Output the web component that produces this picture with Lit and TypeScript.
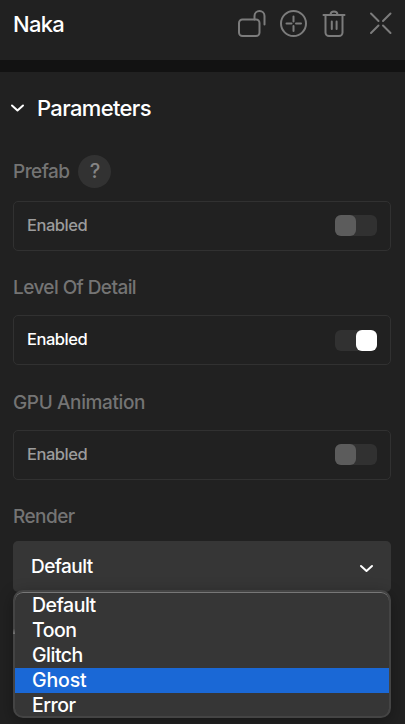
import { LitElement, html, css } from "lit";
import { customElement, property } from "lit/decorators.js";

@customElement("toggle-row")
class ToggleRow extends LitElement {
  @property({ type: Boolean, reflect: true }) on = false;

  static styles = css`
    :host { display: block; }
    .row {
      box-sizing: border-box; height: 50px; padding: 0 13px 1px;
      display: flex; align-items: center; justify-content: space-between;
      border: 1px solid #313131; border-radius: 5px;
    }
    .text { font-size: 16.5px; font-weight: 500; line-height: 20px; letter-spacing: -0.48px; color: #9c9c9c; padding-bottom: 1px; }
    .switch { display: flex; width: 42px; height: 21px; border-radius: 6px; background: #313131; }
    .knob { width: 21px; height: 21px; border-radius: 6px; background: #5c5c5c; }
    :host([on]) .row { padding-bottom: 0; }
    :host([on]) .text { color: #fff; padding-bottom: 2px; }
    :host([on]) .switch { justify-content: flex-end; }
    :host([on]) .knob { background: #fff; }
  `;

  render() {
    return html`<div class="row">
      <span class="text">Enabled</span>
      <span class="switch"><span class="knob"></span></span>
    </div>`;
  }
}

@customElement("app-root")
class AppRoot extends LitElement {
  private options = ["Default", "Toon", "Glitch", "Ghost", "Error"];
  private highlighted = "Ghost";

  static styles = css`
    :host {
      display: block; position: relative; height: 724px; overflow: hidden;
      background: #212121; color: #fff;
      font-family: Inter, "Liberation Sans", sans-serif; font-weight: 500;
    }
    svg { display: block; fill: none; stroke-linecap: round; stroke-linejoin: round; }
    .header {
      box-sizing: border-box; height: 72px; border-bottom: 12px solid #121212;
      padding: 9px 12px 0 13px; display: flex; justify-content: space-between; align-items: flex-start;
    }
    .name { font-size: 22px; line-height: 30px; letter-spacing: -0.75px; }
    .actions { display: flex; stroke: #7c7c7c; stroke-width: 2; }
    .section { height: 72px; display: flex; align-items: center; padding-left: 10px; }
    .title { margin-left: 12px; font-size: 22px; line-height: 30px; letter-spacing: -0.65px; }
    .chevron { stroke: #fff; stroke-width: 2; }
    .body { padding: 0 14px 0 13px; }
    .label {
      box-sizing: border-box; display: flex; align-items: flex-start;
      font-size: 19px; font-weight: 550; line-height: 26px; letter-spacing: -0.55px; color: #747474;
    }
    .prefab { height: 57px; padding-top: 11px; line-height: 33px; }
    .detail { height: 64px; padding-top: 24px; letter-spacing: -0.58px; }
    .gpu { height: 65px; padding-top: 25px; letter-spacing: -0.38px; }
    .render { height: 61px; padding-top: 24px; }
    .help {
      width: 33px; height: 33px; border-radius: 50%; background: #323232; color: #858585;
      margin-left: 9px; text-align: center; font-size: 20px; line-height: 33px; letter-spacing: 0;
    }
    .select {
      box-sizing: border-box; height: 51px; border-radius: 5px; background: #363636;
      display: flex; align-items: center; justify-content: space-between; padding: 0 17px 0 18px;
      font-size: 19px; letter-spacing: -0.55px;
    }
    .menu {
      position: absolute; left: 13px; top: 590px; width: 378px; height: 128px; box-sizing: border-box;
      border: 2px solid #444; border-radius: 10px; background: #363636;
      box-shadow: inset 0 1px 0 #777, 0 4px 16px rgba(0, 0, 0, 0.32);
      padding-top: 1px;
    }
    .menu::before {
      content: ""; position: absolute; left: -2px; top: 37px; width: 2px; height: 5px;
      background: linear-gradient(#484848, #767676);
    }
    .option { height: 25px; line-height: 25px; padding-left: 17px; font-size: 19.5px; letter-spacing: -0.5px; }
    .active { background: #1a68d6; letter-spacing: -0.15px; }
  `;

  render() {
    return html`
      <div class="header">
        <span class="name">Naka</span>
        <svg class="actions" width="155" height="30" viewBox="0 0 155 30">
          <rect x="1" y="10.500" width="20.500" height="16.500" rx="3.500" />
          <path d="M16.500 10.500V7a5 5 0 0 1 10 0v8.500" />
          <circle cx="55.500" cy="14.500" r="12.500" />
          <path d="M48.500 14.500h5M58 14.500h5M55.500 7.500v5M55.500 17v5" />
          <path d="M85.500 6h21M87.500 6v17.500a3.500 3.500 0 0 0 3.500 3.500h10a3.500 3.500 0 0 0 3.500-3.500V6M92.500 5.500c.3-4 6.700-4 7 0M93.800 12.500v7.500M98.600 12.500v7.500" />
          <path d="M133 4.500l7.500 7.500M152.500 4.500L145 12M133 24l7.500-7.500M152.500 24L145 16.500" />
        </svg>
      </div>
      <div class="section">
        <svg class="chevron" width="15" height="12" viewBox="0 0 15 12"><path d="M2 3.500l5.500 5 5.500-5" /></svg>
        <span class="title">Parameters</span>
      </div>
      <div class="body">
        <div class="label prefab">Prefab<span class="help">?</span></div>
        <toggle-row></toggle-row>
        <div class="label detail">Level Of Detail</div>
        <toggle-row on></toggle-row>
        <div class="label gpu">GPU Animation</div>
        <toggle-row></toggle-row>
        <div class="label render">Render</div>
        <div class="select">
          <span>Default</span>
          <svg class="chevron" width="15" height="12" viewBox="0 0 15 12"><path d="M2 5l5.500 5 5.500-5" /></svg>
        </div>
      </div>
      <div class="menu">
        ${this.options.map((o) => html`<div class="option ${o === this.highlighted ? "active" : ""}">${o}</div>`)}
      </div>
    `;
  }
}
